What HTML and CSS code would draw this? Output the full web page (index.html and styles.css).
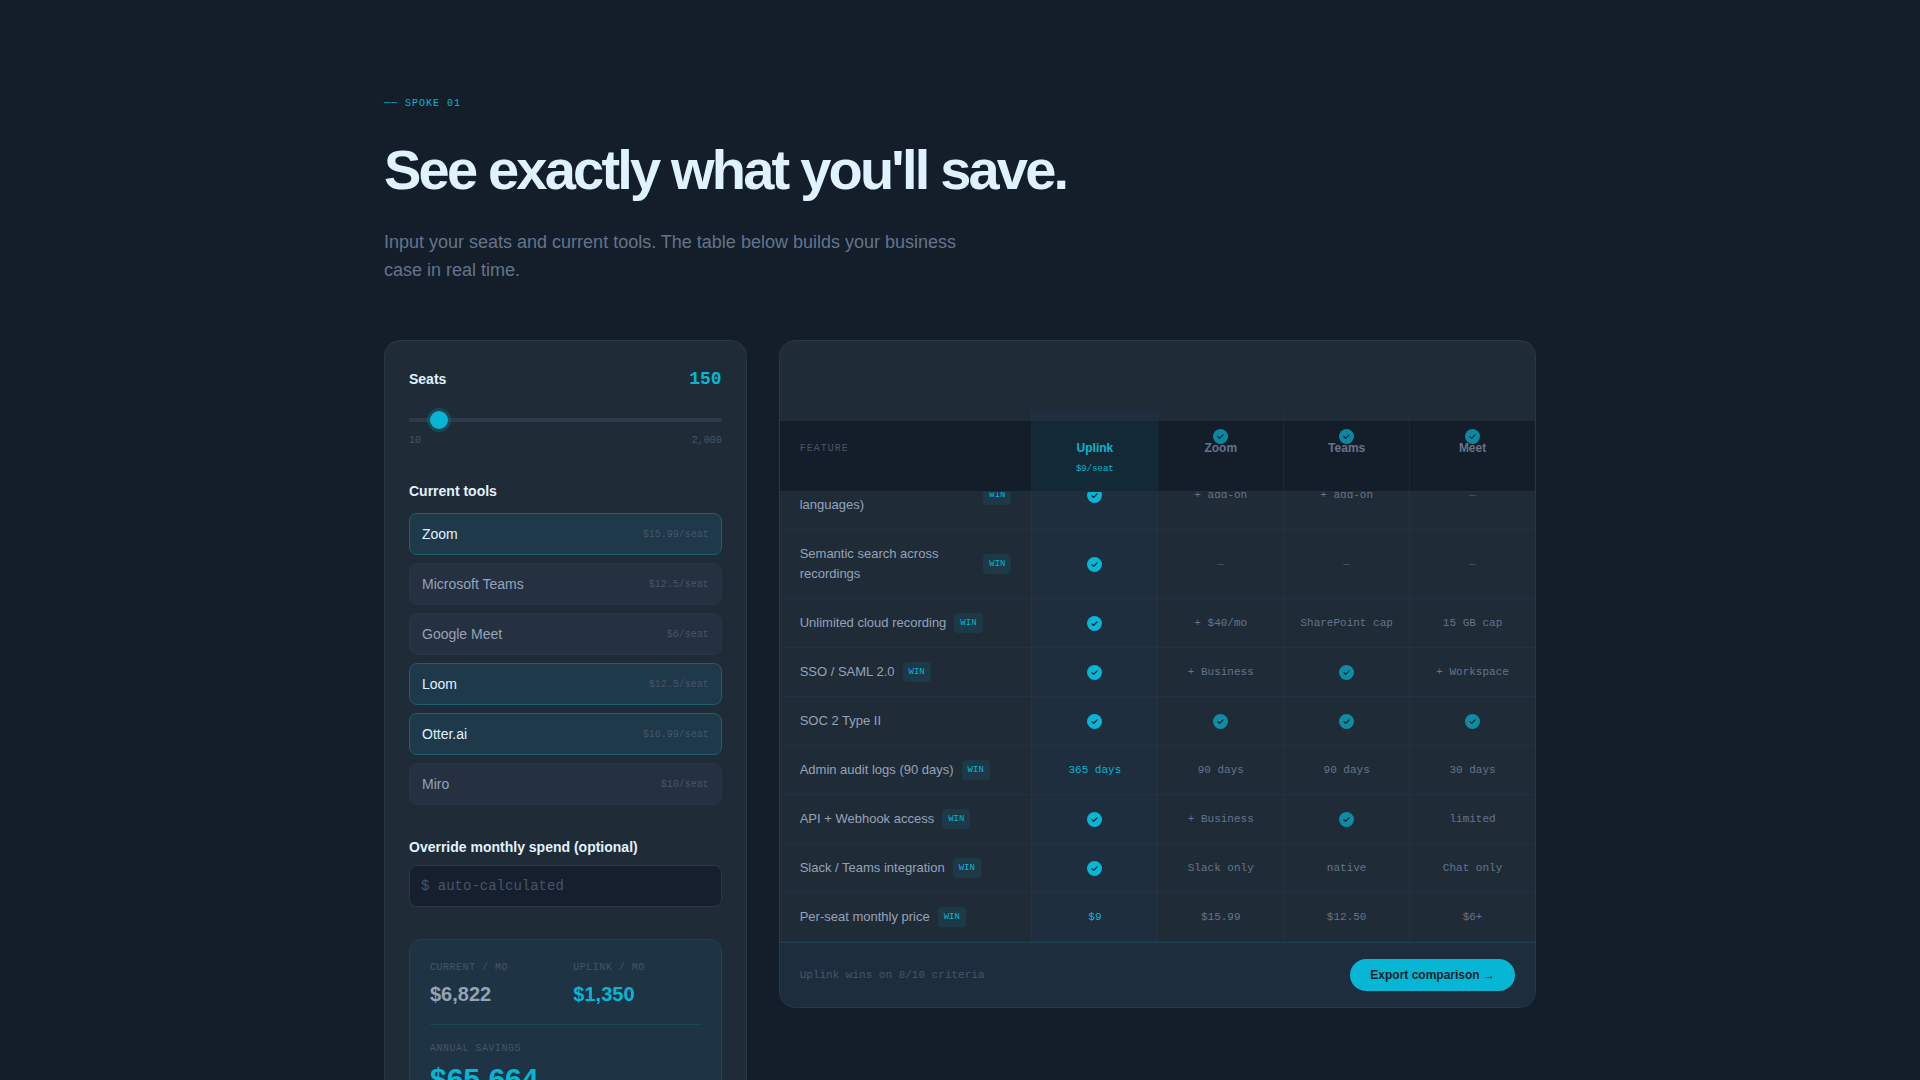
FILE: index.html
```html
<!DOCTYPE html>
<html lang="en">
<head>
  <meta charset="UTF-8" />
  <meta name="viewport" content="width=device-width, initial-scale=1.0"/>
  <title>Uplink - Savings calculator</title>
  <link rel="stylesheet" href="styles.css">
</head>
<body>

  <svg class="sprite" aria-hidden="true">
    <symbol id="check" viewBox="0 0 14 14">
      <circle cx="7" cy="7" r="7" fill="#06b6d4"/>
      <path d="M4.6 7.2l1.6 1.6 3.2-3.4" fill="none" stroke="#141e2a" stroke-width="1.1" stroke-linecap="round" stroke-linejoin="round"/>
    </symbol>
  </svg>

  <section class="spoke">
    <header class="intro">
      <p class="eyebrow">── SPOKE 01</p>
      <h1>See exactly what you'll save.</h1>
      <p class="lead">Input your seats and current tools. The table below builds your business case in real time.</p>
    </header>

    <div class="layout">
      <form class="panel calculator">
        <div class="field">
          <div class="seats-row">
            <label for="seats">Seats</label>
            <output id="seatsValue" for="seats">150</output>
          </div>
          <input type="range" id="seats" min="10" max="2000" step="10" value="150">
          <div class="range-labels"><span>10</span><span>2,000</span></div>
        </div>

        <div class="field">
          <h2>Current tools</h2>
          <div class="tools">
            <button type="button" class="tool active" aria-pressed="true">Zoom <span>$15.99/seat</span></button>
            <button type="button" class="tool" aria-pressed="false">Microsoft Teams <span>$12.5/seat</span></button>
            <button type="button" class="tool" aria-pressed="false">Google Meet <span>$6/seat</span></button>
            <button type="button" class="tool active" aria-pressed="true">Loom <span>$12.5/seat</span></button>
            <button type="button" class="tool active" aria-pressed="true">Otter.ai <span>$16.99/seat</span></button>
            <button type="button" class="tool" aria-pressed="false">Miro <span>$10/seat</span></button>
          </div>
        </div>

        <div class="field">
          <label for="spend">Override monthly spend (optional)</label>
          <input type="text" id="spend" class="spend" placeholder="$ auto-calculated">
        </div>

        <div class="savings">
          <div class="savings-grid">
            <div>
              <div class="stat-label">CURRENT / MO</div>
              <div class="stat-value">$6,822</div>
            </div>
            <div>
              <div class="stat-label">UPLINK / MO</div>
              <div class="stat-value accent">$1,350</div>
            </div>
          </div>
          <div class="annual">
            <div class="stat-label">ANNUAL SAVINGS</div>
            <div class="annual-value">$65,664</div>
          </div>
        </div>
      </form>

      <div class="panel comparison">
        <table>
          <colgroup>
            <col class="col-feature">
            <col span="4">
          </colgroup>
          <thead>
            <tr>
              <th scope="col" class="feature-head">FEATURE</th>
              <th scope="col" class="uplink">Uplink<span class="price">$9/seat</span></th>
              <th scope="col">Zoom</th>
              <th scope="col">Teams</th>
              <th scope="col">Meet</th>
            </tr>
          </thead>
          <tbody>
            <tr>
              <th scope="row"><div class="feature">HD video meetings</div></th>
              <td class="uplink"><svg class="check"><use href="#check"/></svg></td>
              <td><svg class="check"><use href="#check"/></svg></td>
              <td><svg class="check"><use href="#check"/></svg></td>
              <td><svg class="check"><use href="#check"/></svg></td>
            </tr>
            <tr>
              <th scope="row"><div class="feature">AI transcription (40+ languages) <span class="win">WIN</span></div></th>
              <td class="uplink"><svg class="check"><use href="#check"/></svg></td>
              <td>+ add-on</td>
              <td>+ add-on</td>
              <td class="none">—</td>
            </tr>
            <tr>
              <th scope="row"><div class="feature">Semantic search across recordings <span class="win">WIN</span></div></th>
              <td class="uplink"><svg class="check"><use href="#check"/></svg></td>
              <td class="none">—</td>
              <td class="none">—</td>
              <td class="none">—</td>
            </tr>
            <tr>
              <th scope="row"><div class="feature">Unlimited cloud recording <span class="win">WIN</span></div></th>
              <td class="uplink"><svg class="check"><use href="#check"/></svg></td>
              <td>+ $40/mo</td>
              <td>SharePoint cap</td>
              <td>15 GB cap</td>
            </tr>
            <tr>
              <th scope="row"><div class="feature">SSO / SAML 2.0 <span class="win">WIN</span></div></th>
              <td class="uplink"><svg class="check"><use href="#check"/></svg></td>
              <td>+ Business</td>
              <td><svg class="check"><use href="#check"/></svg></td>
              <td>+ Workspace</td>
            </tr>
            <tr>
              <th scope="row"><div class="feature">SOC 2 Type II</div></th>
              <td class="uplink"><svg class="check"><use href="#check"/></svg></td>
              <td><svg class="check"><use href="#check"/></svg></td>
              <td><svg class="check"><use href="#check"/></svg></td>
              <td><svg class="check"><use href="#check"/></svg></td>
            </tr>
            <tr>
              <th scope="row"><div class="feature">Admin audit logs (90 days) <span class="win">WIN</span></div></th>
              <td class="uplink">365 days</td>
              <td>90 days</td>
              <td>90 days</td>
              <td>30 days</td>
            </tr>
            <tr>
              <th scope="row"><div class="feature">API + Webhook access <span class="win">WIN</span></div></th>
              <td class="uplink"><svg class="check"><use href="#check"/></svg></td>
              <td>+ Business</td>
              <td><svg class="check"><use href="#check"/></svg></td>
              <td>limited</td>
            </tr>
            <tr>
              <th scope="row"><div class="feature">Slack / Teams integration <span class="win">WIN</span></div></th>
              <td class="uplink"><svg class="check"><use href="#check"/></svg></td>
              <td>Slack only</td>
              <td>native</td>
              <td>Chat only</td>
            </tr>
            <tr>
              <th scope="row"><div class="feature">Per-seat monthly price <span class="win">WIN</span></div></th>
              <td class="uplink">$9</td>
              <td>$15.99</td>
              <td>$12.50</td>
              <td>$6+</td>
            </tr>
          </tbody>
        </table>
        <div class="comparison-footer">
          <span>Uplink wins on 8/10 criteria</span>
          <button type="button" class="export-btn">Export comparison →</button>
        </div>
      </div>
    </div>
  </section>

  <script>
    const seats = document.getElementById("seats");
    const seatsValue = document.getElementById("seatsValue");

    seats.addEventListener("input", () => {
      seatsValue.textContent = Number(seats.value).toLocaleString("en-US");
    });

    document.querySelectorAll(".tool").forEach((tool) => {
      tool.addEventListener("click", () => {
        const active = tool.classList.toggle("active");
        tool.setAttribute("aria-pressed", active);
      });
    });
  </script>

</body>
</html>
```

FILE: styles.css
```css
:root {
  --bg: #141e2a;
  --panel: #202b38;
  --line: #2b3745;
  --line-soft: #243140;
  --accent: #06b6d4;
  --text: #e0f2fe;
  --text-mid: #94a3b8;
  --text-dim: #64748b;
  --text-faint: #475569;
  --sans: "Liberation Sans", Arial, sans-serif;
  --mono: "Liberation Mono", "Courier New", monospace;
}

* {
  box-sizing: border-box;
}

body {
  margin: 0;
  background: var(--bg);
  color: var(--text);
  font-family: var(--sans);
  font-size: 14px;
  line-height: 21px;
}

h1, h2, p {
  margin: 0;
}

button, input {
  font-family: inherit;
}

.sprite {
  display: none;
}

.spoke {
  max-width: 1200px;
  margin: 0 auto;
  padding: 96px 24px;
}

/* Intro */
.eyebrow {
  margin-bottom: 28px;
  color: var(--accent);
  font-family: var(--mono);
  font-size: 10px;
  line-height: 16px;
  letter-spacing: 1px;
}

h1 {
  margin-bottom: 28px;
  font-size: 56px;
  line-height: 60px;
  letter-spacing: -0.05em;
}

.lead {
  max-width: 576px;
  margin-bottom: 56px;
  color: var(--text-dim);
  font-size: 18px;
  line-height: 28px;
}

.layout {
  display: grid;
  grid-template-columns: repeat(12, minmax(0, 1fr));
  gap: 32px;
  align-items: start;
}

.panel {
  background: var(--panel);
  border: 1px solid var(--line);
  border-radius: 16px;
}

/* Calculator */
.calculator {
  grid-column: span 4;
  padding: 24px;
}

.field {
  margin-bottom: 32px;
}

.field label,
.field h2 {
  display: block;
  font-size: 14px;
  font-weight: 700;
  line-height: 21px;
}

.seats-row {
  display: flex;
  align-items: center;
  justify-content: space-between;
  height: 28px;
}

.seats-row output {
  color: var(--accent);
  font-family: var(--mono);
  font-size: 18px;
  font-weight: 700;
}

input[type="range"] {
  -webkit-appearance: none;
  appearance: none;
  display: block;
  width: 100%;
  height: 18px;
  margin: 18px 0 4px;
  background: linear-gradient(#2d3a48, #2d3a48) center / 100% 4px no-repeat;
  cursor: pointer;
}

input[type="range"]::-webkit-slider-thumb {
  -webkit-appearance: none;
  width: 18px;
  height: 18px;
  border-radius: 50%;
  background: var(--accent);
  box-shadow: 0 0 0 3px rgba(6, 182, 212, 0.2);
}

.range-labels {
  display: flex;
  justify-content: space-between;
  color: var(--text-faint);
  font-family: var(--mono);
  font-size: 10px;
  line-height: 16px;
}

.tools {
  display: grid;
  gap: 8px;
  margin-top: 11px;
}

.tool {
  display: flex;
  align-items: center;
  justify-content: space-between;
  height: 42px;
  padding: 0 12px;
  background: #253041;
  border: 1px solid #293545;
  border-radius: 8px;
  color: var(--text-mid);
  font-size: 14px;
  cursor: pointer;
}

.tool span {
  color: var(--text-faint);
  font-family: var(--mono);
  font-size: 10px;
}

.tool.active {
  background: #1d394a;
  border-color: #1b606f;
  color: var(--text);
}

.spend {
  width: 100%;
  height: 42px;
  margin-top: 7px;
  padding: 0 11px;
  background: #151f2d;
  border: 1px solid #2b3745;
  border-radius: 8px;
  color: var(--text);
  font-family: var(--mono);
  font-size: 14px;
}

.spend::placeholder {
  color: var(--text-faint);
}

.savings {
  padding: 21px 20px;
  background: #1e3343;
  border: 1px solid #1d4452;
  border-radius: 12px;
}

.savings-grid {
  display: grid;
  grid-template-columns: 1fr 1fr;
  gap: 16px;
  padding-bottom: 15px;
}

.stat-label {
  margin-bottom: 4px;
  color: var(--text-faint);
  font-family: var(--mono);
  font-size: 10px;
  line-height: 14px;
  letter-spacing: 0.05em;
}

.stat-value {
  color: var(--text-mid);
  font-size: 20px;
  font-weight: 700;
  line-height: 30px;
}

.stat-value.accent {
  color: var(--accent);
}

.annual {
  padding-top: 17px;
  border-top: 1px solid #1d4452;
}

.annual-value {
  color: var(--accent);
  font-size: 30px;
  font-weight: 700;
  line-height: 38px;
}

/* Comparison */
.comparison {
  grid-column: span 8;
  overflow: hidden;
}

table {
  width: 100%;
  table-layout: fixed;
  border-collapse: separate;
  border-spacing: 0;
}

.col-feature {
  width: calc(100% / 3);
}

thead {
  position: sticky;
  top: 80px;
}

thead th {
  padding: 17px 20px 15px;
  background: var(--bg);
  border-bottom: 1px solid #222e3b;
  color: var(--text-dim);
  font-size: 12px;
  font-weight: 700;
  line-height: 20px;
  vertical-align: top;
}

thead th.uplink {
  background: #132936;
  color: var(--accent);
}

thead .feature-head {
  color: var(--text-faint);
  font-family: var(--mono);
  font-size: 10px;
  font-weight: 400;
  line-height: 22px;
  letter-spacing: 1px;
  text-align: left;
}

.price {
  display: block;
  margin-top: 4px;
  font-family: var(--mono);
  font-size: 9px;
  font-weight: 400;
  line-height: 14px;
}

th + th,
td {
  border-left: 1px solid var(--line-soft);
}

thead th + th {
  border-left-color: #1c2835;
}

tbody th,
tbody td {
  border-bottom: 1px solid var(--line-soft);
}

tbody th {
  padding: 14px 20px;
  color: var(--text-mid);
  font-size: 13px;
  font-weight: 400;
  line-height: 20px;
  text-align: left;
}

tbody td {
  padding: 0 8px;
  color: var(--text-dim);
  font-family: var(--mono);
  font-size: 11px;
  text-align: center;
}

tbody td.uplink {
  background: #1e2e3e;
  color: var(--accent);
}

tbody td.none {
  color: var(--text-faint);
}

.feature {
  display: flex;
  align-items: center;
  gap: 8px;
}

.win {
  padding: 3px 6px;
  background: #1d3847;
  border-radius: 4px;
  color: var(--accent);
  font-family: var(--mono);
  font-size: 9px;
  line-height: 14px;
}

.check {
  display: block;
  width: 15px;
  height: 15px;
  margin: 0 auto;
  opacity: 0.7;
}

.uplink .check {
  opacity: 1;
}

.comparison-footer {
  display: flex;
  align-items: center;
  justify-content: space-between;
  padding: 16px 20px;
  background: #1e2d3d;
  border-top: 1px solid #204052;
}

.comparison-footer span {
  color: var(--text-faint);
  font-family: var(--mono);
  font-size: 11px;
}

.export-btn {
  height: 32px;
  padding: 0 20px;
  background: var(--accent);
  border: none;
  border-radius: 16px;
  color: #141e2a;
  font-size: 12px;
  font-weight: 700;
  cursor: pointer;
}

@media (max-width: 1000px) {
  .calculator,
  .comparison {
    grid-column: span 12;
  }
}
```
